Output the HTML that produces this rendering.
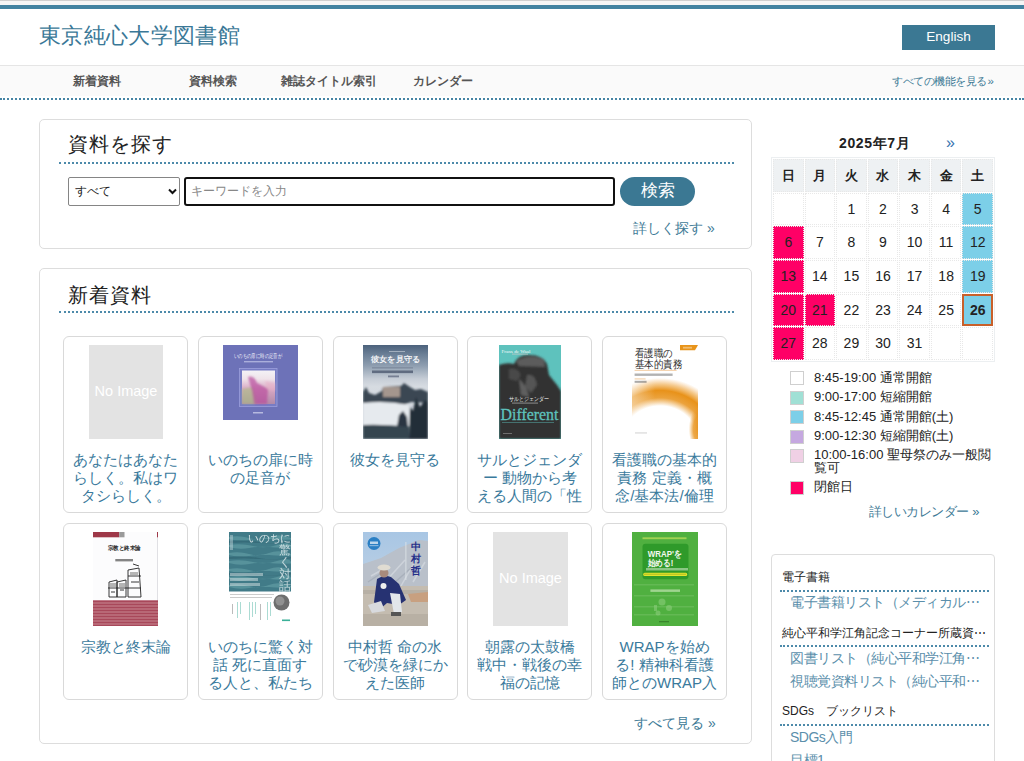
<!DOCTYPE html>
<html lang="ja"><head><meta charset="utf-8">
<style>
*{box-sizing:border-box;margin:0;padding:0}
html,body{width:1024px;height:761px;overflow:hidden;background:#fff}
body{font-family:"Liberation Sans",sans-serif;color:#222;position:relative}
.abs{position:absolute}
#topgray{left:0;top:0;width:1024px;height:1px;background:#cfcfcf}
#toplight{left:0;top:1px;width:1024px;height:4px;background:#f5f5f5}
#topblue{left:0;top:5px;width:1024px;height:4px;background:#4282a0}
#title{left:39px;top:22px;font-size:22px;letter-spacing:0.35px;line-height:28px;color:#3a7897;white-space:nowrap}
#eng{left:902px;top:25px;width:93px;height:25px;background:#3b7893;color:#fff;font-size:13.6px;line-height:24px;text-align:center}
#nav{left:0;top:65px;width:1024px;height:31px;background:#fafafa;border-top:1px solid #e5e5e5}
#navdots{left:0;top:98px;width:1024px;height:2px;border-top:2px dotted #4584a4}
.navi{position:absolute;top:74px;font-size:12px;line-height:14px;font-weight:bold;color:#555;white-space:nowrap}
#allfn{left:892px;top:75px;letter-spacing:-0.5px;font-size:11px;line-height:13px;color:#3e7a96;white-space:nowrap}
.panel{position:absolute;left:39px;width:713px;border:1px solid #ddd;border-radius:5px;background:#fff}
.ph{position:absolute;left:28px;letter-spacing:1px;font-size:19.5px;line-height:24px;color:#222;white-space:nowrap}
.pdots{position:absolute;left:19px;width:675px;height:2px;border-top:2px dotted #4d8aaa}
.more{position:absolute;font-size:14px;line-height:16px;color:#3e7a96;white-space:nowrap}
#sel{left:68px;top:177px;width:112px;height:29px;border:1px solid #858585;border-radius:2px;background:#fff}
#sel span{position:absolute;left:6px;top:5px;font-size:12px;line-height:16px;color:#222}
#sel svg{position:absolute;left:99px;top:10px}
#kw{left:184px;top:177px;width:431px;height:29px;border:2px solid #111;border-radius:3px;background:#fff}
#kw span{position:absolute;left:5px;top:4px;font-size:12px;line-height:16px;color:#888}
#sbtn{left:620px;top:177px;width:75px;height:29px;border-radius:15px;background:#3b7893;color:#fff;font-size:17px;line-height:27px;text-align:center}
.card{position:absolute;width:125px;height:177px;border:1px solid #d9d9d9;border-radius:6px;background:#fff}
.cimg{position:absolute;top:8px}
.ctit{position:absolute;width:125px;white-space:nowrap;top:115px;font-size:15px;line-height:18px;color:#3a7a9c;text-align:center}
.noimg{background:#e3e3e3;color:#fff;font-size:15px;text-align:center}
#cal{left:771px;top:157px;width:224px;height:205px;border:1px solid #eceff1}
#calhead{left:839px;top:135px;letter-spacing:0.6px;font-size:14px;line-height:16px;font-weight:bold;color:#222;white-space:nowrap}
#calnext{left:946px;top:135px;font-size:16px;line-height:16px;color:#3873b0}
.cell{position:absolute;width:30.571px;height:32.667px;border:1px dotted #e8e8e8;font-size:14px;line-height:31px;text-align:center;color:#222}
.hd{background:#eef1f3;font-weight:bold;font-size:13px}
.pk{background:#ff0066}
.bl{background:#7ccfe8}
.leg{position:absolute;left:790px;width:14px;height:14px;border:1px solid #cfcfcf}
.legt{position:absolute;left:814px;font-size:13px;line-height:15px;color:#222;white-space:nowrap}
#side{left:771px;top:554px;width:224px;height:230px;border:1px solid #ddd;border-radius:4px}
.sh{position:absolute;left:782px;font-size:12px;line-height:14px;color:#222;white-space:nowrap}
.sdots{position:absolute;left:780px;width:209px;height:2px;border-top:2px dotted #4d8aaa}
.sl{position:absolute;left:790px;font-size:14px;letter-spacing:-0.5px;line-height:17px;color:#5b8fab;white-space:nowrap}

.today{border:2px solid #c8602a;line-height:29px;font-weight:bold}
.c-no{background:#e3e3e3}
.c-no span{position:absolute;left:0;right:0;top:37px;text-align:center;color:#fff;font-size:14.5px;line-height:18px;white-space:nowrap}
.c-inochi{background:#6f74b9}
.c-kanojo{background:linear-gradient(#8ea3b8,#dfe4ea 45%,#3d5064 75%,#22303e)}
.c-saru{background:linear-gradient(#5fc2bd 0,#5fc2bd 25%,#3a3a3a 40%,#333 100%)}
.c-kango{background:#fff}
.c-shukyo{background:linear-gradient(#fff 0,#fff 74%,#9c3a4a 74%)}
.c-taiwa{background:linear-gradient(#3d6a78 0,#4a7a86 68%,#fff 68%)}
.c-nakamura{background:linear-gradient(#b8cde0,#a9a8a8 55%,#9a9590)}
.c-wrap{background:#4caf3c}
#page{position:relative;width:1024px;height:761px;overflow:hidden}
</style></head><body><div id="page">
<div id="topgray" class="abs"></div>
<div id="toplight" class="abs"></div>
<div id="topblue" class="abs"></div>
<div id="title" class="abs">東京純心大学図書館</div>
<div id="eng" class="abs">English</div>
<div id="nav" class="abs"></div>
<div id="navdots" class="abs"></div>
<div class="navi" style="left:73px">新着資料</div>
<div class="navi" style="left:189px">資料検索</div>
<div class="navi" style="left:281px">雑誌タイトル索引</div>
<div class="navi" style="left:413px">カレンダー</div>
<div id="allfn" class="abs">すべての機能を見る<span style="font-size:11.5px;letter-spacing:0;margin-left:1px">»</span></div>

<!-- search panel -->
<div class="panel" style="top:119px;height:130px">
  <div class="ph" style="top:12px">資料を探す</div>
  <div class="pdots" style="top:42px"></div>
  <div class="more" style="left:593px;top:100px">詳しく探す »</div>
</div>
<div id="sel" class="abs"><span>すべて</span><svg width="9" height="7" viewBox="0 0 9 7"><path d="M1 1.5 L4.5 5 L8 1.5" stroke="#111" stroke-width="2" fill="none"/></svg></div>
<div id="kw" class="abs"><span>キーワードを入力</span></div>
<div id="sbtn" class="abs">検索</div>

<!-- new arrivals panel -->
<div class="panel" style="top:268px;height:476px">
  <div class="ph" style="top:14px">新着資料</div>
  <div class="pdots" style="top:42px"></div>
  <div class="more" style="left:594px;top:446px">すべて見る »</div>
</div>
<div id="cards">
<div class="card" style="left:63.2px;top:336px"></div>
<div class="card" style="left:197.9px;top:336px"></div>
<div class="card" style="left:332.6px;top:336px"></div>
<div class="card" style="left:467.3px;top:336px"></div>
<div class="card" style="left:602.0px;top:336px"></div>
<div class="card" style="left:63.2px;top:523px"></div>
<div class="card" style="left:197.9px;top:523px"></div>
<div class="card" style="left:332.6px;top:523px"></div>
<div class="card" style="left:467.3px;top:523px"></div>
<div class="card" style="left:602.0px;top:523px"></div>
<div class="cimg c-no" style="left:89px;top:345px;width:74px;height:94px"><span>No Image</span></div>
<div class="cimg c-inochi" style="left:223px;top:345px;width:75px;height:75px"><svg width="75" height="75" viewBox="0 0 75 75" style="display:block"><defs><filter id="ib" filterUnits="userSpaceOnUse" x="0" y="0" width="75" height="75"><feGaussianBlur stdDeviation="0.8"/></filter></defs>
<rect width="75" height="75" fill="#6d72b8"/>
<text x="35" y="13" font-family="Liberation Sans" font-size="5.5" text-anchor="middle" fill="#f0f0fa" textLength="48" lengthAdjust="spacingAndGlyphs">いのちの扉に時の足音が</text>
<rect x="21" y="16" width="29" height="1.4" fill="#c5c8ea" opacity="0.7"/>
<rect x="16.5" y="23.5" width="37.5" height="38" fill="#777cc4" stroke="#9ca0dc" stroke-width="0.8"/>
<linearGradient id="ig1" x1="0" y1="0" x2="0" y2="1"><stop offset="0" stop-color="#f4f2f6"/><stop offset="0.25" stop-color="#efe4ea"/><stop offset="0.55" stop-color="#d8a8c4"/><stop offset="1" stop-color="#b08aa8"/></linearGradient>
<rect x="19" y="25.5" width="33" height="33.5" fill="url(#ig1)"/>
<g filter="url(#ib)">
<path d="M19 44 L30 42 L34 59 L19 59Z" fill="#a8c080" opacity="0.6"/>
<path d="M25 32 Q31 30 34 38 L45 44 L44 59 L31 59 L29 46 Z" fill="#b84c9c" opacity="0.7"/>
<path d="M42 36 L52 38 L52 46 L44 44Z" fill="#e8b0c8" opacity="0.6"/>
</g>
<rect x="30" y="67" width="10" height="1.5" fill="#c8cae8" opacity="0.8"/>
</svg></div>
<div class="cimg c-kanojo" style="left:363px;top:345px;width:65px;height:94px"><svg width="65" height="94" viewBox="0 0 65 94" style="display:block"><defs><filter id="kb" filterUnits="userSpaceOnUse" x="-10" y="-10" width="85" height="114"><feGaussianBlur stdDeviation="1"/></filter>
<linearGradient id="kg1" x1="0" y1="0" x2="0" y2="1"><stop offset="0" stop-color="#4c627c"/><stop offset="0.1" stop-color="#6b7f96"/><stop offset="0.22" stop-color="#8e9eb0"/><stop offset="0.36" stop-color="#c6cdd6"/><stop offset="0.44" stop-color="#d6dbe1"/><stop offset="1" stop-color="#c8d0d8"/></linearGradient></defs>
<rect width="65" height="94" fill="url(#kg1)"/>
<g filter="url(#kb)">
<path d="M0 47 L3 42 L6 48 L12 50 L19 46 L20 42 L38 41 L41 38 L47 42 L52 45 L58 44 L65 47 L65 58 L48 57 L40 60 L20 58 L0 58Z" fill="#3a4753"/>
<rect x="20" y="42" width="17" height="10" fill="#a4968e"/>
<path d="M0 58 Q22 55 46 60 L46 80 Q22 82 0 80Z" fill="#e6eaee"/>
<path d="M46 94 L47 62 L50 66 L53 52 L57 62 L62 55 L65 58 L65 94Z" fill="#222d38"/>
<path d="M32 94 L36 70 L40 66 L44 72 L46 94Z" fill="#2a3642"/>
<path d="M0 80 Q20 79 46 82 L46 94 L0 94Z" fill="#34444f"/>
</g>
<text x="32.5" y="16.5" font-family="Liberation Serif" font-weight="bold" font-size="8" text-anchor="middle" fill="#f2f4f7" textLength="49" lengthAdjust="spacingAndGlyphs">彼女を見守る</text>
<rect x="26" y="6" width="16" height="0.8" fill="#e8ecf0" opacity="0.6"/>
<rect x="9" y="22.5" width="41" height="0.8" fill="#2f3a55" opacity="0.4"/>
<rect x="9" y="25.5" width="41" height="2.6" fill="#2f3a55" opacity="0.6"/>
<rect x="25" y="30.5" width="11" height="1.8" fill="#2f3a55" opacity="0.5"/>
</svg></div>
<div class="cimg c-saru" style="left:499px;top:345px;width:62px;height:94px"><svg width="62" height="94" viewBox="0 0 62 94" style="display:block"><defs><filter id="sb" filterUnits="userSpaceOnUse" x="-5" y="-5" width="72" height="104"><feGaussianBlur stdDeviation="0.8"/></filter></defs>
<rect width="62" height="94" fill="#5ec2bd"/>
<g filter="url(#sb)">
<path d="M0 20 Q8 17 15 19 Q18 10 30 10 Q44 10 48 19 L50 30 L58 40 L62 46 L62 94 L0 94Z" fill="#333333"/>
<path d="M17 16 Q30 8 45 14 L46 22 L20 21Z" fill="#5c5c5c"/>
<path d="M10 24 Q18 22 22 30 L18 36 L10 34Z" fill="#4a4a4a"/>
<path d="M28 30 Q36 28 38 40 L32 48 L26 42Z" fill="#555"/>
<path d="M20 34 Q28 40 30 52 L22 50 Z" fill="#6a6a6a" opacity="0.8"/>
</g>
<text x="2.5" y="7.5" font-family="Liberation Serif" font-size="5" fill="#f0f8f8" textLength="29" lengthAdjust="spacingAndGlyphs">Frans de Waal</text>
<rect x="13" y="8.5" width="16" height="1.2" fill="#ccc" opacity="0.6"/>
<text x="30" y="56" font-family="Liberation Serif" font-size="6" text-anchor="middle" fill="#eeeeee" textLength="40" lengthAdjust="spacingAndGlyphs">サルとジェンダー</text>
<rect x="13" y="57.5" width="26" height="1.2" fill="#ccc" opacity="0.5"/>
<text x="30.5" y="75" font-family="Liberation Serif" font-size="16.5" text-anchor="middle" fill="#5ec2bd" stroke="#5ec2bd" stroke-width="0.3" textLength="58" lengthAdjust="spacingAndGlyphs">Different</text>
<rect x="3" y="77" width="52" height="0.9" fill="#5ec2bd" opacity="0.5"/>
<rect x="4" y="88" width="9" height="1" fill="#aaa" opacity="0.5"/>
</svg></div>
<div class="cimg c-kango" style="left:632px;top:345px;width:66px;height:94px"><svg width="66" height="94" viewBox="0 0 66 94" style="display:block">
<rect width="66" height="94" fill="#fff"/>
<radialGradient id="og" cx="28" cy="95" r="62" gradientUnits="userSpaceOnUse" gradientTransform="translate(28 95) scale(1.1 1) translate(-28 -95)"><stop offset="0" stop-color="#e8921a" stop-opacity="0"/><stop offset="0.55" stop-color="#e8921a" stop-opacity="0"/><stop offset="0.68" stop-color="#e8921a" stop-opacity="0.85"/><stop offset="0.8" stop-color="#e8921a" stop-opacity="1"/><stop offset="0.9" stop-color="#ec9c2c" stop-opacity="0.55"/><stop offset="1" stop-color="#f0a040" stop-opacity="0"/></radialGradient>
<rect width="66" height="94" fill="url(#og)"/>
<radialGradient id="og2" cx="68" cy="84" r="16" gradientUnits="userSpaceOnUse" gradientTransform="translate(68 84) scale(0.7 1.4) translate(-68 -84)"><stop offset="0" stop-color="#e8921a" stop-opacity="1"/><stop offset="0.6" stop-color="#e8921a" stop-opacity="0.8"/><stop offset="1" stop-color="#e8921a" stop-opacity="0"/></radialGradient>
<rect width="66" height="94" fill="url(#og2)"/>
<linearGradient id="ofade" x1="0" y1="0" x2="1" y2="0"><stop offset="0" stop-color="#fff" stop-opacity="0.45"/><stop offset="0.35" stop-color="#fff" stop-opacity="0"/></linearGradient>
<rect width="66" height="94" fill="url(#ofade)"/>
<path d="M48 0 L66 0 L63 5.3 L48 5.3Z" fill="#e8941a"/>
<rect x="51" y="1.8" width="9" height="1.8" fill="#f8d8a8" opacity="0.6"/>
<text x="2.6" y="11.8" font-family="Liberation Serif" font-size="10.5" fill="#2e2e2e" textLength="38" lengthAdjust="spacingAndGlyphs">看護職の</text>
<text x="2.6" y="23" font-family="Liberation Serif" font-size="10.5" fill="#2e2e2e" textLength="47.5" lengthAdjust="spacingAndGlyphs">基本的責務</text>
<rect x="2.6" y="24.8" width="42" height="1.2" fill="#e8a050" opacity="0.45"/>
<rect x="2.6" y="28.5" width="38" height="2.4" fill="#555" opacity="0.45"/>
<rect x="2.6" y="33.6" width="11" height="0.7" fill="#e8a050" opacity="0.8"/>
<rect x="2.6" y="35.8" width="12" height="2" fill="#555" opacity="0.5"/>
<rect x="3" y="87.5" width="12" height="0.9" fill="#999" opacity="0.5"/>
</svg></div>
<div class="cimg c-shukyo" style="left:93px;top:532px;width:65px;height:94px"><svg width="65" height="94" viewBox="0 0 65 94" style="display:block">
<rect width="65" height="94" fill="#fcfcfd"/>
<rect x="64" y="0" width="1" height="94" fill="#e0e0e4"/>
<rect x="0" y="0" width="26.3" height="5.3" fill="#9e3848"/>
<rect x="26.3" y="0" width="5.2" height="5.3" fill="#9a9a9a"/>
<rect x="64" y="0" width="1" height="5.3" fill="#9e3848"/>
<text x="31" y="17.5" font-family="Liberation Serif" font-weight="bold" font-size="6" text-anchor="middle" fill="#2a2a2a" textLength="33" lengthAdjust="spacingAndGlyphs">宗教と終末論</text>
<rect x="22.3" y="27" width="17.7" height="2.4" fill="#444" opacity="0.65"/>
<g fill="none" stroke="#222" stroke-width="0.9">
<path d="M16 50 L24 48 L24 65 L16 65Z M24 50 L33 48 L33 65 L24 65Z M35 38 L46 36 L48 65 L35 65Z M15 56 L48 56 M35 44 L48 44 M18 60 L22 60 M27 58 L31 58 M38 50 L46 50 M40 32 L46 34"/>
</g>
<g fill="#333" opacity="0.35"><rect x="17" y="51" width="6" height="4"/><rect x="26" y="51" width="6" height="4"/><rect x="37" y="40" width="8" height="3"/></g>
<rect x="0" y="68.3" width="65" height="25.7" fill="#a8485a"/>
<g fill="#e8c8cc" opacity="0.5"><rect x="0" y="70.5" width="65" height="1"/><rect x="0" y="73.5" width="65" height="1"/><rect x="0" y="76.5" width="65" height="1"/><rect x="0" y="79.5" width="65" height="1"/><rect x="0" y="82.5" width="65" height="1"/><rect x="0" y="85.5" width="65" height="1"/><rect x="0" y="88.5" width="65" height="1"/><rect x="0" y="91.5" width="65" height="1"/></g>
</svg></div>
<div class="cimg c-taiwa" style="left:229px;top:532px;width:62px;height:94px"><svg width="62" height="94" viewBox="0 0 62 94" style="display:block"><defs><filter id="tb" filterUnits="userSpaceOnUse" x="-5" y="-5" width="72" height="70"><feGaussianBlur stdDeviation="0.6"/></filter></defs>
<rect width="62" height="94" fill="#fff"/>
<rect x="0" y="0" width="62" height="59.5" fill="#417b88"/>
<g filter="url(#tb)">
<g fill="#6aa6ac" opacity="0.55">
<path d="M0 5 Q10 3 20 6 T40 5 T62 6 L62 7.5 Q50 8 40 7 T20 8 T0 7Z"/>
<path d="M0 13 Q12 11 24 14 T48 13 T62 14 L62 15.5 Q50 16 40 15 T20 16 T0 15Z"/>
<path d="M0 21 Q10 19 20 22 T40 21 T62 22 L62 23.5 Q50 24 40 23 T20 24 T0 23Z"/>
<path d="M0 29 Q12 27 24 30 T48 29 T62 30 L62 31.5 Q50 32 40 31 T20 32 T0 31Z"/>
<path d="M0 37 Q10 35 20 38 T40 37 T62 38 L62 39.5 Q50 40 40 39 T20 40 T0 39Z"/>
<path d="M0 45 Q12 43 24 46 T48 45 T62 46 L62 47.5 Q50 48 40 47 T20 48 T0 47Z"/>
<path d="M0 53 Q10 51 20 54 T40 53 T62 54 L62 55.5 Q50 56 40 55 T20 56 T0 55Z"/>
</g>
<g fill="#2c5e6c" opacity="0.5">
<path d="M0 9 Q15 7 30 10 T62 9 L62 10.5 Q45 12 30 11 T0 11Z"/>
<path d="M0 25 Q15 23 30 26 T62 25 L62 26.5 Q45 28 30 27 T0 27Z"/>
<path d="M0 41 Q15 39 30 42 T62 41 L62 42.5 Q45 44 30 43 T0 43Z"/>
</g>
</g>
<text x="19" y="10" font-family="Liberation Sans" font-size="10.5" fill="#eef4f5" opacity="0.85" textLength="43" lengthAdjust="spacingAndGlyphs">いのちに</text>
<g font-family="Liberation Sans" font-size="11.5" fill="#eef4f5" opacity="0.75"><text x="49.5" y="22">驚</text><text x="49.5" y="34">く</text><text x="49.5" y="46">対</text><text x="49.5" y="58">話</text></g>
<rect x="1" y="3" width="3" height="15" fill="#d8e6e8" opacity="0.4"/>
<rect x="1" y="41" width="33" height="3" fill="#e8f0f0" opacity="0.45"/>
<rect x="1" y="46" width="28" height="3" fill="#e8f0f0" opacity="0.45"/>
<rect x="1" y="51" width="30" height="3" fill="#e8f0f0" opacity="0.45"/>
<rect x="1" y="62" width="44" height="1" fill="#999" opacity="0.5"/>
<rect x="1" y="65" width="42" height="1" fill="#999" opacity="0.5"/>
<g fill="#5ab8a8" opacity="0.5"><rect x="8" y="70" width="1" height="16"/><rect x="11" y="70" width="1" height="12"/><rect x="20" y="70" width="1" height="18"/><rect x="23" y="70" width="1" height="15"/><rect x="26" y="70" width="1" height="12"/><rect x="38" y="70" width="1" height="18"/><rect x="41" y="70" width="1" height="14"/></g>
<rect x="3" y="72" width="1" height="10" fill="#777" opacity="0.5"/>
<rect x="31" y="72" width="1" height="16" fill="#777" opacity="0.5"/>
<circle cx="52.5" cy="70.5" r="8" fill="#6e6e6e"/>
<circle cx="51" cy="69" r="4.5" fill="#a8a8a8" opacity="0.6"/>
<rect x="53" y="87.5" width="8" height="1.6" fill="#3ab098"/>
</svg></div>
<div class="cimg c-nakamura" style="left:363px;top:532px;width:65px;height:94px"><svg width="65" height="94" viewBox="0 0 65 94" style="display:block"><defs><filter id="nb" filterUnits="userSpaceOnUse" x="-5" y="-5" width="75" height="104"><feGaussianBlur stdDeviation="0.7"/></filter></defs>
<linearGradient id="ng1" x1="0" y1="0" x2="0" y2="1"><stop offset="0" stop-color="#a8c6e4"/><stop offset="1" stop-color="#ccd8e4"/></linearGradient>
<rect width="65" height="94" fill="url(#ng1)"/>
<g filter="url(#nb)">
<path d="M0 32 L18 26 L36 16 L56 8 L65 9 L65 56 L0 56Z" fill="#b9c0ca"/>
<path d="M8 44 L26 34 M22 50 L42 28 M38 54 L56 22 M50 50 L62 30" stroke="#d6dbe2" stroke-width="1.5" opacity="0.7"/>
<path d="M5 50 L20 40 M30 52 L48 36" stroke="#9ea6b2" stroke-width="1.5" opacity="0.6"/>
<rect x="0" y="54" width="65" height="40" fill="#c4bcb0"/>
<rect x="0" y="58" width="65" height="4" fill="#aaa49a" opacity="0.5"/>
<rect x="0" y="82" width="65" height="12" fill="#b0a89c" opacity="0.6"/>
<path d="M45 62 L65 60 L65 70 L48 70Z" fill="#c8a080"/>
<path d="M14 47 Q21 42 28 45 L36 52 L43 68 L36 73 L24 71 L16 78 L11 70 Z" fill="#283272"/>
<path d="M27 61 L37 62 L39 80 L31 82 Z" fill="#e2e6ea"/>
<path d="M5 73 L18 69 L22 79 L9 81Z" fill="#d8dade"/>
<rect x="28" y="80" width="10" height="4" fill="#555"/>
<ellipse cx="21" cy="41" rx="4.5" ry="4.5" fill="#a88a7c"/>
<ellipse cx="21" cy="35.5" rx="6.5" ry="3" fill="#e0dcd2"/>
<ellipse cx="20.5" cy="54" rx="3" ry="3" fill="#eeeeee"/>
</g>
<circle cx="11" cy="11.5" r="6.5" fill="#2a7fc4"/>
<rect x="7" y="9.5" width="8" height="2.5" fill="#e0ecf6" opacity="0.8"/>
<rect x="6.5" y="13" width="9" height="1.2" fill="#e0ecf6" opacity="0.5"/>
<rect x="42" y="10" width="1.6" height="38" fill="#dde2e8" opacity="0.55"/>
<g font-family="Liberation Sans" font-weight="bold" font-size="10" fill="#26308a"><text x="48" y="18">中</text><text x="48" y="30">村</text><text x="48" y="41.5">哲</text></g>
</svg></div>
<div class="cimg c-no" style="left:493px;top:532px;width:75px;height:94px"><span>No Image</span></div>
<div class="cimg c-wrap" style="left:632px;top:532px;width:66px;height:94px"><svg width="66" height="94" viewBox="0 0 66 94" style="display:block">
<rect width="66" height="94" fill="#50b040"/>
<rect x="10.5" y="5.3" width="44" height="1.9" fill="#d8e860" opacity="0.6"/>
<rect x="10.5" y="11.8" width="46" height="35.5" rx="3" fill="#2f9a2a"/>
<text x="15.8" y="25" font-family="Liberation Sans" font-weight="bold" font-size="9" fill="#f4f8f0" textLength="34" lengthAdjust="spacingAndGlyphs">WRAP'を</text>
<text x="15.8" y="34" font-family="Liberation Sans" font-weight="bold" font-size="9" fill="#f4f8f0" textLength="25.5" lengthAdjust="spacingAndGlyphs">始める!</text>
<rect x="14" y="36" width="42" height="2.5" fill="#d8ecd0" opacity="0.55"/>
<rect x="11.2" y="40.7" width="44" height="3.3" rx="1.5" fill="#e4e42a"/>
<rect x="12" y="41.7" width="42" height="1.2" fill="#7a9a20" opacity="0.4"/>
<rect x="18.4" y="57.4" width="29.6" height="2.5" fill="#d4ecc4" opacity="0.6"/>
<g fill="#7cc46c" opacity="0.45"><rect x="2" y="52" width="60" height="1.5"/><rect x="2" y="63" width="60" height="1.5"/><rect x="2" y="74" width="60" height="1.5"/><rect x="2" y="82" width="60" height="1.5"/></g>
<g fill="#90d080" opacity="0.55"><circle cx="30" cy="70" r="3.5"/><circle cx="37" cy="76" r="3"/><circle cx="26" cy="81" r="2.5"/><rect x="22" y="73" width="3" height="6"/></g>
<rect x="27" y="89" width="10" height="1.3" fill="#2a6a20" opacity="0.6"/>
</svg></div>
<div class="ctit" style="left:63.2px;top:451px">あなたはあなた<br>らしく。私はワ<br>タシらしく。</div>
<div class="ctit" style="left:197.9px;top:451px">いのちの扉に時<br>の足音が</div>
<div class="ctit" style="left:332.6px;top:451px">彼女を見守る</div>
<div class="ctit" style="left:467.3px;top:451px">サルとジェンダ<br>ー 動物から考<br>える人間の「性</div>
<div class="ctit" style="left:602.0px;top:451px">看護職の基本的<br>責務 定義・概<br>念/基本法/倫理</div>
<div class="ctit" style="left:63.2px;top:638px">宗教と終末論</div>
<div class="ctit" style="left:197.9px;top:638px">いのちに驚く対<br>話 死に直面す<br>る人と、私たち</div>
<div class="ctit" style="left:332.6px;top:638px">中村哲 命の水<br>で砂漠を緑にか<br>えた医師</div>
<div class="ctit" style="left:467.3px;top:638px">朝露の太鼓橋<br>戦中・戦後の幸<br>福の記憶</div>
<div class="ctit" style="left:602.0px;top:638px">WRAPを始め<br>る! 精神科看護<br>師とのWRAP入</div>
</div><!--/cards-->

<!-- calendar -->
<div id="calhead" class="abs">2025年7月</div>
<div id="calnext" class="abs">»</div>
<div id="cal" class="abs"></div>
<div id="calcells">
<div class="cell hd" style="left:773.00px;top:159px">日</div>
<div class="cell hd" style="left:804.57px;top:159px">月</div>
<div class="cell hd" style="left:836.14px;top:159px">火</div>
<div class="cell hd" style="left:867.71px;top:159px">水</div>
<div class="cell hd" style="left:899.28px;top:159px">木</div>
<div class="cell hd" style="left:930.86px;top:159px">金</div>
<div class="cell hd" style="left:962.43px;top:159px">土</div>
<div class="cell" style="left:773.00px;top:192.67px"></div>
<div class="cell" style="left:804.57px;top:192.67px"></div>
<div class="cell" style="left:836.14px;top:192.67px">1</div>
<div class="cell" style="left:867.71px;top:192.67px">2</div>
<div class="cell" style="left:899.28px;top:192.67px">3</div>
<div class="cell" style="left:930.86px;top:192.67px">4</div>
<div class="cell bl" style="left:962.43px;top:192.67px">5</div>
<div class="cell pk" style="left:773.00px;top:226.33px">6</div>
<div class="cell" style="left:804.57px;top:226.33px">7</div>
<div class="cell" style="left:836.14px;top:226.33px">8</div>
<div class="cell" style="left:867.71px;top:226.33px">9</div>
<div class="cell" style="left:899.28px;top:226.33px">10</div>
<div class="cell" style="left:930.86px;top:226.33px">11</div>
<div class="cell bl" style="left:962.43px;top:226.33px">12</div>
<div class="cell pk" style="left:773.00px;top:260.00px">13</div>
<div class="cell" style="left:804.57px;top:260.00px">14</div>
<div class="cell" style="left:836.14px;top:260.00px">15</div>
<div class="cell" style="left:867.71px;top:260.00px">16</div>
<div class="cell" style="left:899.28px;top:260.00px">17</div>
<div class="cell" style="left:930.86px;top:260.00px">18</div>
<div class="cell bl" style="left:962.43px;top:260.00px">19</div>
<div class="cell pk" style="left:773.00px;top:293.67px">20</div>
<div class="cell pk" style="left:804.57px;top:293.67px">21</div>
<div class="cell" style="left:836.14px;top:293.67px">22</div>
<div class="cell" style="left:867.71px;top:293.67px">23</div>
<div class="cell" style="left:899.28px;top:293.67px">24</div>
<div class="cell" style="left:930.86px;top:293.67px">25</div>
<div class="cell bl today" style="left:962.43px;top:293.67px">26</div>
<div class="cell pk" style="left:773.00px;top:327.34px">27</div>
<div class="cell" style="left:804.57px;top:327.34px">28</div>
<div class="cell" style="left:836.14px;top:327.34px">29</div>
<div class="cell" style="left:867.71px;top:327.34px">30</div>
<div class="cell" style="left:899.28px;top:327.34px">31</div>
<div class="cell" style="left:930.86px;top:327.34px"></div>
<div class="cell" style="left:962.43px;top:327.34px"></div>
</div><!--/calcells-->

<!-- sidebar -->

<!-- legend -->
<div class="leg" style="top:371px;background:#fff"></div><div class="legt" style="top:370px">8:45-19:00 通常開館</div>
<div class="leg" style="top:391px;background:#a0e0d5"></div><div class="legt" style="top:389px">9:00-17:00 短縮開館</div>
<div class="leg" style="top:410px;background:#7ccfe8"></div><div class="legt" style="top:409px">8:45-12:45 通常開館(土)</div>
<div class="leg" style="top:430px;background:#c5a8e0"></div><div class="legt" style="top:428px">9:00-12:30 短縮開館(土)</div>
<div class="leg" style="top:449px;background:#f0d0e5"></div><div class="legt" style="top:448px;line-height:13px">10:00-16:00 聖母祭のみ一般閲<br>覧可</div>
<div class="leg" style="top:481px;background:#ff0066"></div><div class="legt" style="top:479px">閉館日</div>
<div class="more" style="left:869px;top:504px;font-size:13px;letter-spacing:-0.55px">詳しいカレンダー<span style="letter-spacing:0"> »</span></div>

<div id="side" class="abs"></div>
<div class="sh" style="top:570px">電子書籍</div>
<div class="sdots" style="top:590px"></div>
<div class="sl" style="top:594px">電子書籍リスト（メディカル⋯</div>
<div class="sh" style="top:626px">純心平和学江角記念コーナー所蔵資⋯</div>
<div class="sdots" style="top:645px"></div>
<div class="sl" style="top:650px">図書リスト（純心平和学江角⋯</div>
<div class="sl" style="top:673px">視聴覚資料リスト（純心平和⋯</div>
<div class="sh" style="top:704px">SDGs　ブックリスト</div>
<div class="sdots" style="top:724px"></div>
<div class="sl" style="top:729px">SDGs入門</div>
<div class="sl" style="top:752px">目標1</div>

</div></body></html>
